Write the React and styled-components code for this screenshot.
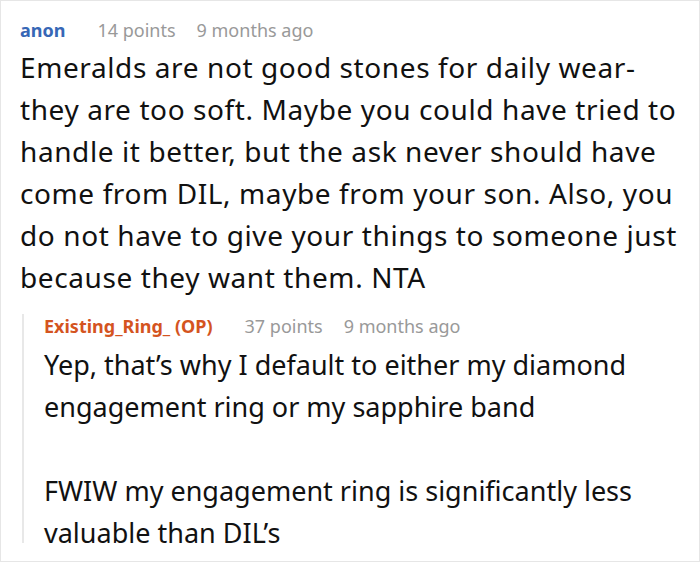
import React from "react";
import styled, { createGlobalStyle } from "styled-components";

const Global = createGlobalStyle`
  html, body { margin: 0; padding: 0; background: #fff; }
  body { font-family: "Noto Sans", "Open Sans", sans-serif; color: #111; }
`;

const Frame = styled.div`
  box-sizing: border-box;
  width: 700px;
  height: 562px;
  border: 1px solid #e6e6e6;
  padding: 17px 17px 18px 19px;
  display: flex;
  flex-direction: column;
  background: #fff;
`;

const Clip = styled.div`
  flex: 1;
  min-height: 0;
  overflow: hidden;
`;

const Comment = styled.div`
  display: flex;
  flex-direction: column;
`;

const Reply = styled(Comment)`
  margin-top: 16px;
  margin-left: 2px;
  padding-left: 20px;
  border-left: 2px solid #e8e8e8;
`;

const Meta = styled.div`
  display: flex;
  align-items: baseline;
  font-size: 18px;
  line-height: 24px;
`;

const Author = styled.span`
  font-weight: 700;
  color: ${(p) => (p.$op ? "#d4541f" : "#3767b6")};
  margin-right: 32px;
`;

const Info = styled.span`
  color: #999999;
  margin-right: 21px;
`;

const Body = styled.div`
  margin-top: ${(p) => p.$gap}px;
  font-size: ${(p) => p.$size}px;
  letter-spacing: ${(p) => p.$track}px;
  line-height: 42px;
  color: #111;
`;

const Para = styled.p`
  margin: 0;
  & + & { margin-top: 42px; }
`;

export default function App() {
  return (
    <>
      <Global />
      <Frame>
        <Clip>
          <Comment>
            <Meta>
              <Author>anon</Author>
              <Info>14 points</Info>
              <Info>9 months ago</Info>
            </Meta>
            <Body $gap={4} $size={28} $track={0.6}>
              <Para>
                Emeralds are not good stones for daily wear- they are too soft. Maybe you could have tried to handle it better, but the ask never should have come from DIL, maybe from your son. Also, you do not have to give your things to someone just because they want them. NTA
              </Para>
            </Body>
          </Comment>
          <Reply>
            <Meta>
              <Author $op>Existing_Ring_ (OP)</Author>
              <Info>37 points</Info>
              <Info>9 months ago</Info>
            </Meta>
            <Body $gap={6} $size={27} $track={0}>
              <Para>Yep, that’s why I default to either my diamond engagement ring or my sapphire band</Para>
              <Para>FWIW my engagement ring is significantly less valuable than DIL’s</Para>
            </Body>
          </Reply>
        </Clip>
      </Frame>
    </>
  );
}
